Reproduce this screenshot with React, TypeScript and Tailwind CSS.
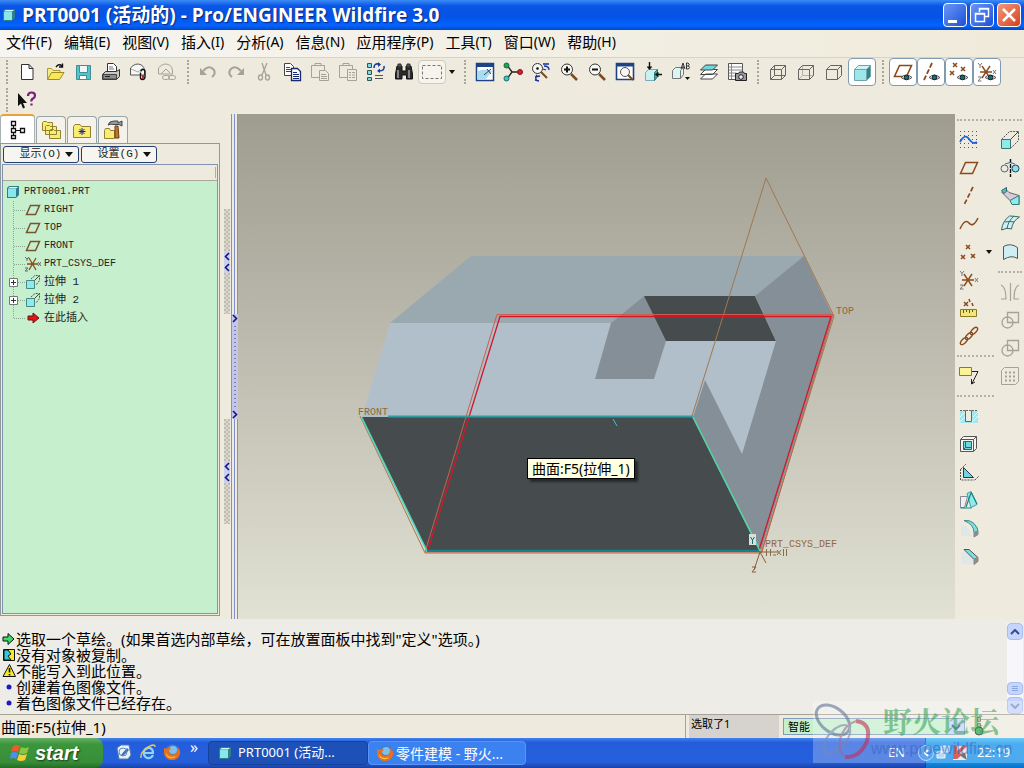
import { FC, ReactNode } from "react";

interface IconProps {
  children: ReactNode;
}

// Shared 20x20 frame for every toolbar drawing
const Icon: FC<IconProps> = ({ children }) => (
  <svg
    viewBox="0 0 20 20"
    className="h-5 w-5 shrink-0"
    fill="none"
    stroke="#333"
    strokeWidth={1}
    aria-hidden="true"
  >
    {children}
  </svg>
);

const brown = "#8a4a1c";
const gray = "#a5a296";

const Eye = () => (
  <g>
    <path d="M8 15.5q5-5 11 0q-5 4-11 0z" fill="#dfe8e4" stroke="#555" />
    <circle cx="13.5" cy="15.5" r="2.3" fill="#1f6e66" stroke="#123" />
  </g>
);

const Cross: FC<{ x: number; y: number; c?: string }> = ({ x, y, c }) => (
  <path
    d={`M${x - 2} ${y - 2}l4 4m0-4l-4 4`}
    stroke={c ?? brown}
    strokeWidth={1.5}
  />
);

const Csys = () => (
  <g>
    <path d="M3 10h12M5 4l8 12M13 4L5 16" stroke={brown} strokeWidth={1.4} />
    <path
      d="M1 1l2 2.5L5 1M3 3.5V6M1 15h3.5L1 19h3.500M16 8l3 4m0-4l-3 4"
      stroke="#777"
    />
  </g>
);

const Magnifier: FC<{ sign?: string }> = ({ sign }) => (
  <g>
    <path d="M12 12l6 6" stroke="#7a4a20" strokeWidth={2.5} />
    <circle cx="8" cy="7.500" r="5.500" fill="#f7f7f2" />
    {sign && <path d={sign} stroke="#111" strokeWidth={2} />}
  </g>
);

const icons: Record<string, ReactNode> = {
  newFile: (
    <path d="M4.500 2.500h7.500l4 4v11H4.500zM12 2.500v4h4" fill="#fff" />
  ),
  open: (
    <g>
      <path d="M2.500 17.500v-11h4l1.500 2h7v3" fill="#f4ee8a" stroke="#b09a30" />
      <path d="M2.500 17.500l4-7h12.500l-4.500 7z" fill="#f7e95c" stroke="#a08a20" />
      <path d="M11 5q3-4 6-1M17.500 1.500v3.500h-3.500" stroke="#111" strokeWidth={1.400} />
    </g>
  ),
  save: (
    <g stroke="#3f8f96">
      <path d="M3.500 3.500h14v14h-14z" fill="#55c4c8" />
      <path d="M6.500 3.500h8v7h-8z" fill="#eef8f8" />
      <path d="M6.500 13.500h7v4h-7z" fill="#fff" />
    </g>
  ),
  print: (
    <g>
      <path d="M6.500 9.500v-8h6l3 3v5" fill="#fff" />
      <path d="M8 5h4M8 7h5" stroke="#777" />
      <path d="M1.500 12.500l3-3h11l3-2v7l-3 3h-14z" fill="#c9c9c9" />
      <path d="M2 12.500h13.500v4.500H2z" fill="#8f8f8f" stroke="#444" />
      <path d="M4 14.500h5" stroke="#222" />
    </g>
  ),
  mail: (
    <g>
      <path d="M1.500 13V6q5-6 11-3q3 2 3 6v4z" fill="#f7f7f4" stroke="#555" />
      <path d="M2 7l7 3 5-4" stroke="#aaa" />
      <path d="M12 9.500q0-2 2-2t2 2v5q0 3-2.500 3t-2-3v-4" stroke="#111" strokeWidth={1.400} />
      <path d="M13 13h2v4h-2z" fill="#a33" stroke="none" />
    </g>
  ),
  mailLink: (
    <g stroke={gray}>
      <path d="M1.500 12V6q5-6 11-3q3 2 3 6v3z" />
      <path d="M4 12l5-5 4 4" />
      <rect x="5.500" y="13.500" width="7" height="4" rx="2" />
      <rect x="11.500" y="13.500" width="7" height="4" rx="2" />
    </g>
  ),
  undo: (
    <g stroke={gray} strokeWidth={2}>
      <path d="M5 9q6-7 11-1q2 4-2 7" />
      <path d="M2 6v7h7z" fill={gray} stroke="none" />
    </g>
  ),
  redo: (
    <g stroke={gray} strokeWidth={2}>
      <path d="M15 9Q9 2 4 8q-2 4 2 7" />
      <path d="M18 6v7h-7z" fill={gray} stroke="none" />
    </g>
  ),
  cut: (
    <g stroke={gray} strokeWidth={1.300}>
      <path d="M8 1l4 12M13 1L8 13" />
      <ellipse cx="6.500" cy="15.500" rx="2" ry="2.500" />
      <ellipse cx="13.500" cy="15.500" rx="2" ry="2.500" />
    </g>
  ),
  copy: (
    <g stroke="#444">
      <path d="M2.500 1.500h6l3 3v9h-9z" fill="#fff" />
      <path d="M4 5.500h4M4 7.500h5M4 9.500h5" stroke="#444" />
      <path d="M9.500 6.500h6l3 3v9h-9z" fill="#fff" stroke="#17296e" strokeWidth={1.300} />
      <path d="M11 10.500h4M11 12.500h6M11 14.500h6M11 16.500h6" stroke="#17296e" />
    </g>
  ),
  paste: (
    <g stroke={gray}>
      <path d="M1.500 3.500h13v12h-13zM5 3.500v-2h6v2z" />
      <path d="M9.500 8.500h6l3 3v7h-9z" fill="#eeeade" />
      <path d="M11 12.500h5M11 14.500h6M11 16.500h6" />
    </g>
  ),
  pasteSpecial: (
    <g stroke={gray}>
      <path d="M1.500 3.500h13v12h-13zM5 3.500v-2h6v2z" />
      <path d="M9.500 7.500h9v11h-9z" fill="#eeeade" />
      <path d="M11 10.500h2M14 10.500h3M11 13h2M14 13h3M11 15.500h2M14 15.500h3" />
    </g>
  ),
  regen: (
    <g>
      <path d="M1.500 1.500h4v4h-4zM1.500 8.500h4v4h-4zM1.500 15.500h4v3h-4z" fill="#7ed9dc" stroke="#355" />
      <path d="M8 6q0-5 5-4M18 4q1 5-5 5" stroke="#1a3a9a" strokeWidth={1.600} />
      <path d="M12 0v5l3-2.500zM14 11V6.500l-3 2.500z" fill="#1a3a9a" stroke="none" />
      <path d="M9 13.500h8M9 16.500h8" stroke="#555" />
    </g>
  ),
  find: (
    <g>
      <path d="M3 4h5v5h4V4h5l1.500 8v5h-6v-4H8v4H1.500v-5z" fill="#2b2b2b" stroke="#111" />
      <path d="M4 2h3v3H4zM13 2h3v3h-3z" fill="#555" />
      <path d="M4 8v8M15 8v8" stroke="#ddd" />
    </g>
  ),
  box: <path d="M.5 3.500h19v13H.5z" stroke="#777" strokeDasharray="3 2" />,
  view: (
    <g>
      <path d="M1.500 1.500h17v17h-17z" fill="#fff" stroke="#1c4385" strokeWidth={1.500} />
      <path d="M1 1h18v4H1z" fill="#1c4385" stroke="none" />
      <path d="M3 9q7-3 14 0l-6 8H3z" fill="#a8dcf0" stroke="none" />
      <path d="M9 13L16 7M12 7l4 5" stroke="#346" />
    </g>
  ),
  tree3d: (
    <g>
      <path d="M4 3l5 7-5 7M9 10h8" stroke="#222" strokeWidth={1.400} />
      <circle cx="3.500" cy="3.500" r="2.500" fill="#1faa38" stroke="#165" />
      <circle cx="3.500" cy="16.500" r="2.500" fill="#3cc4c8" stroke="#266" />
      <circle cx="17" cy="10" r="2.500" fill="#d0202c" stroke="#812" />
    </g>
  ),
  reorient: (
    <g>
      <circle cx="6.500" cy="6.500" r="5" fill="#f7f7f2" />
      <circle cx="6.500" cy="6.500" r="1" fill="#111" />
      <path d="M10 10l6 6" stroke="#7a4a20" strokeWidth={2} />
      <path d="M12 2h6M13 4q5 0 5 4M12 7l3 1M6 13q-3 4 1 6M4 15l5-1M8 19l-4-1" stroke="#15329a" strokeWidth={1.300} />
    </g>
  ),
  zoomIn: <Magnifier sign="M5 7.500h6M8 4.500v6" />,
  zoomOut: <Magnifier sign="M5 7.500h6" />,
  refit: (
    <g>
      <path d="M1.500 1.500h17v16h-17z" fill="#fff" stroke="#1c4385" strokeWidth={1.600} />
      <path d="M1 1h18v3.500H1z" fill="#1c4385" stroke="none" />
      <circle cx="10" cy="10" r="4.500" fill="#f7f7f2" stroke="#555" />
      <path d="M13 13l5 5" stroke="#7a4a20" strokeWidth={2} />
    </g>
  ),
  orient: (
    <g>
      <path d="M2.500 10.500l3-3h9v7l-3 4h-9z" fill="#c8f2f2" stroke="#7ab" />
      <path d="M11.500 10.500l3-3v7l-3 4z" fill="#4aa0a0" stroke="#377" />
      <path d="M6.500 0v7M4.500 4.500l2 2.500 2-2.500M19 12.500h-6M15.500 10.500l-2.500 2 2.500 2" stroke="#111" strokeWidth={1.400} />
    </g>
  ),
  saved: (
    <g>
      <path d="M1.500 8.500l3-3h8v7l-3 4h-8z" fill="#ddf4f4" stroke="#777" />
      <path d="M9.500 16.500v-8l3-3" stroke="#777" />
      <path d="M10 7l2-6 2 6M11 5h2M15.500 1v6h2q2-2 0-3q1.500-2-.5-3zM15.500 4h2" stroke="#333" />
      <path d="M14 15h5l-2.500 3z" fill="#111" stroke="none" />
    </g>
  ),
  layers: (
    <g stroke="#444">
      <path d="M1.500 17l5-5h12l-5 5zM1.500 12.500l5-5h12l-5 5z" fill="#fff" />
      <path d="M1.500 8l5-5h12l-5 5z" fill="#6fd8dc" />
    </g>
  ),
  snapshot: (
    <g>
      <path d="M1.500 1.500h14v16h-14z" fill="#fff" stroke="#555" />
      <path d="M4.500 2v15M1.500 5h14M1.500 8h14M1.500 11h8M1.500 14h8" stroke="#888" />
      <path d="M8.500 11.500h3l1-1.500h4l1 1.500h2v7h-11z" fill="#999" stroke="#222" />
      <circle cx="14" cy="15" r="2.300" fill="#eee" stroke="#222" />
    </g>
  ),
  wire: (
    <path d="M2.500 7.500h11v10h-11zM6.500 3.500h11v10h-11zM2.500 7.500l4-4M13.500 7.500l4-4M13.500 17.500l4-4M2.500 17.500l4-4" stroke="#666" />
  ),
  hidden: (
    <g stroke="#666">
      <path d="M6.500 3.500v10h11M6.500 13.500l-4 4" stroke="#b5b2a8" />
      <path d="M2.500 7.500h11v10h-11zl4-4h11v10l-4 4M13.500 7.500l4-4" />
    </g>
  ),
  noHidden: (
    <path d="M2.500 7.500h11v10h-11zl4-4h11v10l-4 4M13.500 7.500l4-4" stroke="#666" />
  ),
  shaded: (
    <g stroke="#6aa8ac">
      <path d="M2.500 7.500l4-4h12l-4 4z" fill="#c9f5f5" />
      <path d="M2.500 7.500h12v11h-12z" fill="#9fe6e8" />
      <path d="M14.500 7.500l4-4v11l-4 4z" fill="#357f86" />
    </g>
  ),
  planeEye: (
    <g>
      <path d="M6.500 3.500h12l-5 11h-12z" stroke={brown} strokeWidth={1.600} />
      <Eye />
    </g>
  ),
  axisEye: (
    <g>
      <path d="M11 1L3 18" stroke={brown} strokeWidth={1.800} strokeDasharray="5 2" />
      <Eye />
    </g>
  ),
  pointEye: (
    <g>
      <Cross x={6} y={3} />
      <Cross x={3} y={11} />
      <Cross x={14} y={7} />
      <Eye />
    </g>
  ),
  csysEye: (
    <g>
      <Csys />
      <Eye />
    </g>
  ),
  help: (
    <g>
      <path d="M1 3v13l3-2.500 2 5 2-1-2-4.500h4z" fill="#111" stroke="none" />
      <path d="M11 6q0-3.500 3.500-3.500t3.500 3q0 2-2 3t-1.500 3M14.500 13.500v2" stroke="#7c1d7c" strokeWidth={2.200} />
    </g>
  ),
  sketch: (
    <g>
      {[1, 5, 9, 13, 17].map((y) => (
        <path key={y} d={`M1 ${y}.500h19`} stroke="#555" strokeDasharray="1 3" />
      ))}
      <path d="M1 12q5-9 9-3t8 3" stroke="#1c62d8" strokeWidth={1.800} />
    </g>
  ),
  plane: <path d="M6.500 4.500h12l-5 11h-12z" stroke={brown} strokeWidth={1.500} />,
  axis: <path d="M14 1L5 19" stroke={brown} strokeWidth={1.700} strokeDasharray="5 2" />,
  curve: <path d="M1 15q5-11 9-6t9-5" stroke={brown} strokeWidth={1.500} />,
  points: (
    <g>
      <Cross x={9} y={5} />
      <Cross x={4} y={15} />
      <Cross x={14} y={14} />
    </g>
  ),
  csys: <Csys />,
  analysis: (
    <g>
      <Cross x={7} y={6} />
      <path d="M10 1l1 3M13 5l1 3" stroke={brown} strokeWidth={1.500} />
      <path d="M1.500 11.500h16v7h-16z" fill="#f0e67c" stroke="#8a7a20" />
      <path d="M4.500 12v3M7.500 12v2M10.500 12v3M13.500 12v2" stroke="#6a5a10" />
    </g>
  ),
  chain: (
    <g stroke={brown} strokeWidth={1.400}>
      <ellipse cx="5" cy="15" rx="4.500" ry="2.200" transform="rotate(-45 5 15)" />
      <ellipse cx="10" cy="10" rx="4.500" ry="2.200" transform="rotate(-45 10 10)" />
      <ellipse cx="15" cy="5" rx="4.500" ry="2.200" transform="rotate(-45 15 5)" />
    </g>
  ),
  note: (
    <g>
      <path d="M.5 1.500h12v8H.5z" fill="#faf39a" stroke="#8a7a20" />
      <path d="M13 5.500h6l-6 12M12.500 13v5l3.500-2" stroke="#222" />
    </g>
  ),
  hole: (
    <g>
      <path d="M1 5h18v12H1z" fill="#a3e6ee" stroke="none" />
      <path d="M1 11l5-5M1 16l6-6M13 16l6-6M14 11l5-5" stroke="#eafcff" />
      <path d="M4 4.500h2.500v11h6v-11H15" fill="#eeeade" stroke="#666" />
      <path d="M1 4.500h18" stroke="#666" strokeDasharray="2 1" />
    </g>
  ),
  shell: (
    <g stroke="#555">
      <path d="M1.500 5.500l3-3h13v12l-3 3h-13z" fill="#f5f5f0" />
      <path d="M1.500 5.500h13v12M14.500 5.500l3-3" />
      <path d="M4.500 7.500h8v8h-8z" fill="#6fd8dc" />
      <path d="M4.500 15.500l2-2v-6M6.500 13.500h6" />
    </g>
  ),
  rib: (
    <g>
      <path d="M4.500 5.500v10h10z" fill="#6fd8dc" stroke="#335" />
      <path d="M1.500 7v11h14M2 7l5-5M16 18l4-4" stroke="#555" strokeDasharray="2 1" />
    </g>
  ),
  draft: (
    <g>
      <path d="M8 3.500l4-2 6 13-6 3z" fill="#8feaec" stroke="#599" />
      <path d="M1.500 6.500h7l-3 11h-4z" fill="#f1f1ec" stroke="#889" />
      <path d="M1.500 18h11M12 3L7 17M12 2l6 12" stroke="#188" strokeWidth={1.200} />
    </g>
  ),
  round: (
    <g>
      <path d="M2 7q9 1 10 11H2z" fill="#dfe8e8" stroke="none" />
      <path d="M5 2.500q6-1 10 3 4 4 4 8l-4 1q0-8-10-12z" fill="#7bdde0" stroke="#488" />
      <path d="M15 14.500l4-1v3l-4 2.500z" fill="#8a8f8c" stroke="#888" />
    </g>
  ),
  chamfer: (
    <g>
      <path d="M2 6l4 0 8 8v4H2z" fill="#dfe8e8" stroke="none" />
      <path d="M5 3.500h5l9 8-4 2z" fill="#7bdde0" stroke="#555" />
      <path d="M15 13.500l4-2v4l-4 3z" fill="#8a8f8c" stroke="#888" />
    </g>
  ),
  extrude: (
    <g>
      <path d="M1.500 9.500l8-8h9v9l-8 8" stroke="#555" strokeDasharray="2 1" />
      <path d="M1.500 9.500h9v9h-9z" fill="#8feaec" stroke="#377" />
      <path d="M10.500 9.500l8-8" stroke="#444" />
    </g>
  ),
  revolve: (
    <g>
      <circle cx="4.500" cy="10.500" r="3.500" stroke="#468" />
      <circle cx="15.500" cy="10.500" r="3.500" fill="#8fdfe4" stroke="#246" />
      <path d="M10.500 1v18" stroke="#111" strokeDasharray="4 1" strokeWidth={1.400} />
      <path d="M5 6q5-3 10 0" stroke="#468" />
    </g>
  ),
  sweep: (
    <g>
      <path d="M5 2.500l4 4 10 3v9l-9-4-8-8z" fill="#d4ccd8" stroke="#666" />
      <path d="M1.500 4.500l5-3v4l-3 2z" fill="#48c4c8" stroke="#366" />
      <path d="M10 14.500l9-5v9h-7z" fill="#8feaec" stroke="#377" />
    </g>
  ),
  boundary: (
    <g>
      <path d="M1.500 16q1-9 8-14 4 0 10 1-7 4-8 12-4-2-10 1z" fill="#c9f3f3" stroke="#466" />
      <path d="M5 8q5-1 9 0M14 2q-6 5-7 13" stroke="#466" />
    </g>
  ),
  style: (
    <path d="M3.500 4.500q7-4 14 1v11q-6-4-14 1z" fill="#cdeff3" stroke="#555" />
  ),
  mirror: (
    <path d="M10.500 1v18M1 3q5 2 5 14h-5M19 3q-5 2-5 14h5" stroke={gray} strokeWidth={1.200} />
  ),
  merge: (
    <g stroke={gray} strokeWidth={1.300}>
      <circle cx="7.500" cy="12.500" r="5.500" />
      <path d="M7.500 2.500h11v10h-11z" />
    </g>
  ),
  pattern: (
    <g stroke={gray}>
      <path d="M1.500 4.500l3-3h14v14l-3 3h-14z" />
      <path d="M5 6.500h11M5 10.500h11M5 14.500h11" strokeWidth={2} strokeDasharray="2 2" />
    </g>
  ),
};

interface ToolProps {
  name: string;
  boxed?: boolean;
}

const Tool: FC<ToolProps> = ({ name, boxed }) => (
  <button
    type="button"
    aria-label={name}
    className={
      boxed
        ? "flex h-7 w-7 shrink-0 items-center justify-center rounded-sm border border-[#7f9bb0] bg-white"
        : "flex h-7 w-7 shrink-0 items-center justify-center"
    }
  >
    <Icon>{icons[name]}</Icon>
  </button>
);

const VSep = () => (
  <div className="flex h-7 w-[13px] shrink-0 justify-center py-[2px]">
    <div className="border-l-2 border-dotted border-[#aaa798]" />
  </div>
);

const HSep = () => (
  <div className="flex h-3 w-full flex-col justify-center px-[2px]">
    <div className="border-t-2 border-dotted border-[#b5b2a4]" />
  </div>
);

const Caret = () => (
  <svg viewBox="0 0 6 4" className="h-1 w-[6px]" aria-hidden="true">
    <path d="M0 0h6L3 4z" fill="#111" />
  </svg>
);

const Cube = () => (
  <svg viewBox="0 0 14 14" className="h-[14px] w-[14px] shrink-0" aria-hidden="true">
    <path d="M1 3l2-2h10v9l-3 3H1z" fill="#2f7f8a" />
    <path d="M2 3.500l1.500-1.500h8.500l-2 1.500z" fill="#d8fbfb" />
    <path d="M2 4h8v8H2z" fill="#86e8ea" />
  </svg>
);

const Firefox = () => (
  <svg viewBox="0 0 18 18" className="h-[18px] w-[18px] shrink-0" aria-hidden="true">
    <circle cx="9.500" cy="8.500" r="7" fill="#3d7fd6" />
    <circle cx="10" cy="7" r="4" fill="#7cc0ee" />
    <path d="M1 5q2 1 4 0 2-1 3 1-3 1-2 4 2 3 6 1 3-2 2-7 4 3 3 7-2 6-8 6T1 11z" fill="#e8701c" />
    <path d="M3 10q3 6 10 3-2 3-6 2-4-1-4-5z" fill="#f8c83c" />
  </svg>
);

const menus = [
  ["文件", "(F)"],
  ["编辑", "(E)"],
  ["视图", "(V)"],
  ["插入", "(I)"],
  ["分析", "(A)"],
  ["信息", "(N)"],
  ["应用程序", "(P)"],
  ["工具", "(T)"],
  ["窗口", "(W)"],
  ["帮助", "(H)"],
];

const TitleBar = () => (
  <header className="flex h-[30px] items-center bg-[linear-gradient(#3a8cf5,#0a55e5_20%,#0553e6_55%,#0263ff_85%,#0348c8)] pr-[3px] pl-[2px]">
    <Cube />
    <h1 className="ml-[6px] flex-1 font-['Open_Sans','Noto_Sans_CJK_SC',sans-serif] text-[19px] leading-none font-bold whitespace-nowrap text-white [text-shadow:1px_1px_1px_#0a2a80]">
      PRT0001 (活动的) - Pro/ENGINEER Wildfire 3.0
    </h1>
    <div className="flex gap-[3px]">
      <button type="button" aria-label="Minimize" className="h-6 w-6 rounded border border-white bg-linear-to-br from-[#6a96f5] to-[#1c4fd8]">
        <svg viewBox="0 0 22 22" aria-hidden="true">
          <path d="M4 16h9v3H4z" fill="#fff" />
        </svg>
      </button>
      <button type="button" aria-label="Restore" className="h-6 w-6 rounded border border-white bg-linear-to-br from-[#6a96f5] to-[#1c4fd8]">
        <svg viewBox="0 0 22 22" fill="none" stroke="#fff" aria-hidden="true">
          <path d="M8.500 8V4.500h9v8H14M8 5h10M4.500 9.500h9v8h-9zM4 10h10" strokeWidth={1.500} />
        </svg>
      </button>
      <button type="button" aria-label="Close" className="h-6 w-6 rounded border border-white bg-linear-to-br from-[#f0987a] to-[#d63c14]">
        <svg viewBox="0 0 22 22" fill="none" stroke="#fff" aria-hidden="true">
          <path d="M5 5l12 12M17 5L5 17" strokeWidth={2.500} />
        </svg>
      </button>
    </div>
  </header>
);

const MenuBar = () => (
  <nav className="flex h-7 items-start gap-3 border-b border-[#d8d4c4] bg-linear-to-r from-[#f6f5f1] to-[#efeada] pt-[2px] pl-[6px]">
    {menus.map(([label, key]) => (
      <button key={label} type="button" className="flex items-center whitespace-nowrap">
        <span className="text-[15px] leading-5">{label}</span>
        <span className="text-[14px] leading-5">{key}</span>
      </button>
    ))}
  </nav>
);

const ToolBars = () => (
  <div>
    <div className="flex h-7 items-center">
      <VSep />
      {["newFile", "open", "save", "print", "mail", "mailLink"].map((n) => (
        <Tool key={n} name={n} />
      ))}
      <VSep />
      {["undo", "redo", "cut", "copy", "paste", "pasteSpecial", "regen", "find"].map(
        (n) => (
          <Tool key={n} name={n} />
        )
      )}
      <button
        type="button"
        aria-label="box"
        className="flex h-6 w-7 shrink-0 items-center justify-center rounded-sm border border-[#cfcbbb] bg-[#f6f4ec]"
      >
        <Icon>{icons.box}</Icon>
      </button>
      <button type="button" aria-label="filter" className="flex h-7 w-3 shrink-0 items-center justify-center">
        <Caret />
      </button>
      <VSep />
      {[
        "view",
        "tree3d",
        "reorient",
        "zoomIn",
        "zoomOut",
        "refit",
        "orient",
        "saved",
        "layers",
        "snapshot",
      ].map((n) => (
        <Tool key={n} name={n} />
      ))}
      <VSep />
      <Tool name="wire" />
      <Tool name="hidden" />
      <Tool name="noHidden" />
      <Tool name="shaded" boxed />
      <VSep />
      {["planeEye", "axisEye", "pointEye", "csysEye"].map((n) => (
        <Tool key={n} name={n} boxed />
      ))}
    </div>
    <div className="flex h-7 items-center">
      <VSep />
      <Tool name="help" />
    </div>
  </div>
);

interface TreeRow {
  label: string;
  icon: "plane" | "csys" | "extrude" | "insert";
  plus?: boolean;
}

const treeRows: TreeRow[] = [
  { label: "RIGHT", icon: "plane" },
  { label: "TOP", icon: "plane" },
  { label: "FRONT", icon: "plane" },
  { label: "PRT_CSYS_DEF", icon: "csys" },
  { label: "拉伸 1", icon: "extrude", plus: true },
  { label: "拉伸 2", icon: "extrude", plus: true },
  { label: "在此插入", icon: "insert" },
];

const treeIcons = {
  plane: <path d="M5.500 3.500h9l-4 9h-9z" stroke="#7a5230" strokeWidth={1.500} />,
  csys: (
    <g>
      <path d="M2 8h11M4 2l7 12M11 2L4 14" stroke={brown} strokeWidth={1.300} />
      <path d="M0 1l2 2 2-2M2 3v2M0 12h3l-3 3h3M13 6l3 4m0-4l-3 4" stroke="#666" />
    </g>
  ),
  extrude: (
    <g>
      <path d="M1.500 6.500h8v8h-8z" fill="#8feaec" stroke="#488" />
      <path d="M6 5l4-3.500h4.500v5L11 11" stroke="#555" strokeDasharray="2 1" />
      <path d="M9.500 6.500l5-5" stroke="#444" />
    </g>
  ),
  insert: <path d="M3 6h5V3l6 5-6 5v-3H3z" fill="#e01818" stroke="#701010" />,
};

const FolderShape = () => (
  <path d="M1.500 17.500v-11l1.500-2h5l1.500 2h9v11z" fill="#f8ec72" stroke="#8f8330" />
);

const tabClass =
  "flex h-[27px] w-[30px] items-center justify-center rounded-t-sm border border-b-0 border-[#9aa5a8] bg-[#f4f2ea]";

const ModelTree = () => (
  <aside className="flex w-[220px] shrink-0 flex-col pb-[3px]">
    <div className="flex h-[29px] items-end gap-[1px]">
      <button type="button" aria-label="Model tree" className="flex h-[29px] w-[35px] items-center justify-center rounded-t border-x border-t-2 border-x-[#a9b3b4] border-t-[#e9a23a] bg-white">
        <Icon>
          <path d="M3.500 1.500h4v4h-4zM3.500 8.500h4v4h-4zM3.500 15.500h4v3h-4zM12.500 8.500h4v4h-4z" stroke="#111" strokeWidth={1.300} />
          <path d="M5.500 5.500v3M5.500 12.500v3M7.500 10.500h5" stroke="#111" />
        </Icon>
      </button>
      <button type="button" aria-label="Folders" className={tabClass}>
        <Icon>
          <g fill="#f8ec72" stroke="#8f8330">
            <path d="M1.500 10.500v-8l1-1h3l1 1h5v8zM4.500 14.500v-8l1-1h3l1 1h6v8zM8.500 18.500v-8l1-1h3l1 1h6v8z" />
          </g>
        </Icon>
      </button>
      <button type="button" aria-label="Favorites" className={tabClass}>
        <Icon>
          <FolderShape />
          <path d="M10 8v7M6.500 11.500h7M7.500 9l5 5M12.500 9l-5 5" stroke="#15258a" />
        </Icon>
      </button>
      <button type="button" aria-label="Connections" className={tabClass}>
        <Icon>
          <path d="M1.500 18.500v-8l1-2h4l1 2h4v8z" fill="#f8ec72" stroke="#8f8330" />
          <path d="M5 5q1-4 6-4h4v2l4-2v5l-3-1.500h-5q-3-1-6 .500z" fill="#8fa0a4" stroke="#444" />
          <path d="M12 6h3l1 12h-4z" fill="#c4752c" stroke="#6d3d12" />
        </Icon>
      </button>
    </div>
    <div className="flex flex-1 flex-col border border-[#8d9a9c] p-[1px] pt-[2px]">
      <div className="flex gap-[2px] px-[1px] pb-[1px]">
        {["显示(O)", "设置(G)"].map((label) => (
          <button
            key={label}
            type="button"
            className="flex h-[17px] w-[76px] items-center justify-center gap-1 rounded-[3px] border border-[#24406a] bg-[#f6f5f0] pl-[11px] font-['Liberation_Mono','Noto_Sans_CJK_SC',monospace] text-[11px] leading-none whitespace-nowrap text-[#222]"
          >
            {label}
            <svg viewBox="0 0 8 5" className="h-[5px] w-2" aria-hidden="true">
              <path d="M0 0h8L4 5z" fill="#111" />
            </svg>
          </button>
        ))}
      </div>
      <div className="flex flex-1 flex-col border border-[#8292b0] bg-[#c6efce]">
        <div className="flex h-4 justify-end border-b border-[#aaa798] bg-[#eeeade] py-[2px] pr-[1px]">
          <div className="border-l border-[#b0ad9f]" />
        </div>
        <ul className="pt-[2px] font-['Liberation_Mono','Noto_Sans_CJK_SC',monospace] text-[10px] leading-[18px] text-[#222]">
          <li className="flex h-[18px] items-center gap-1 pl-[3px]">
            <Cube />
            PRT0001.PRT
          </li>
          {treeRows.map((row, i) => (
            <li key={row.label} className="flex h-[18px] items-center">
              <svg viewBox="0 0 22 18" className="h-[18px] w-[22px]" fill="none" stroke="#8aa890" aria-hidden="true">
                <path d={i === treeRows.length - 1 ? "M10.500 0v9" : "M10.500 0v18"} strokeDasharray="1 1" />
                <path d="M11 9.500h11" strokeDasharray="1 1" />
                {row.plus && (
                  <g stroke="#333">
                    <path d="M6.500 5.500h8v8h-8z" fill="#fff" stroke="#777" />
                    <path d="M8 9.500h5M10.500 7v5" />
                  </g>
                )}
              </svg>
              <svg viewBox="0 0 16 16" className="mr-[3px] h-4 w-4" fill="none" aria-hidden="true">
                {treeIcons[row.icon]}
              </svg>
              <span className={row.icon === "extrude" || row.icon === "insert" ? "text-[11px]" : ""}>
                {row.label}
              </span>
            </li>
          ))}
        </ul>
      </div>
    </div>
  </aside>
);

const SashGrip = () => (
  <svg viewBox="0 0 6 105" className="h-[105px] w-[6px]" fill="none" aria-hidden="true">
    <path d="M0 0h6v105H0z" fill="#dcd9cf" />
    <path d="M1 0v105M5 0v105" stroke="#a09d92" strokeDasharray="2 2" />
    <path d="M3 2v103" stroke="#a09d92" strokeDasharray="2 2" />
    <path d="M0 42h6v22H0z" fill="#cdd0ea" />
    <path d="M5 44L1.500 47.500 5 51M5 55l-3.500 3.500L5 62" stroke="#12128a" strokeWidth={1.600} />
  </svg>
);

const Splitter = () => (
  <div className="flex w-[18px] shrink-0">
    <div className="flex w-[11px] flex-col items-center justify-center gap-[105px] pl-[2px]">
      <SashGrip />
      <SashGrip />
    </div>
    <div className="flex w-[7px] flex-col items-center border-x border-[#7f8fcf]">
      <div className="w-px flex-1 bg-[#7f8fcf]" />
      <svg viewBox="0 0 6 105" className="h-[105px] w-[6px]" fill="none" aria-hidden="true">
        <path d="M0 0h6v105H0z" fill="#c3c6ea" />
        <path d="M3 12v82" stroke="#33336a" strokeDasharray="1 3" />
        <path d="M1 1l3.500 3.500L1 8M1 97l3.500 3.500L1 104" stroke="#12128a" strokeWidth={1.600} />
      </svg>
      <div className="w-px flex-1 bg-[#7f8fcf]" />
    </div>
  </div>
);

const Viewport = () => (
  <main className="relative min-w-0 flex-1 bg-linear-to-b from-[#9f9c90] to-[#e1e1d4]">
    <svg viewBox="238 114 717 505" className="absolute inset-0 h-full w-full" fill="none">
      <g stroke="none">
        <path d="M471 256H804L755 296H644L611 323H390z" fill="#9aa8b0" />
        <path d="M390 323H611L595 379H654L666 341H776L742 454 705 380 694 417H362z" fill="#b0bfca" />
        <path d="M644 296L611 323 595 379H654L666 341z" fill="#858f98" />
        <path d="M644 296H755L776 341H666z" fill="#464c4e" />
        <path d="M804 256L833 316 761 551 693 417 705 380 742 454 776 341 755 296z" fill="#858f98" />
        <path d="M362 417H693L760 551H427z" fill="#464c4e" />
      </g>
      <path d="M766 178L834 316 761 553 692 416z" stroke="#a07850" />
      <path d="M360 416L425 553H761" stroke="#a87848" />
      <path d="M497 314.500H833L762 552H425z" stroke="#c8604c" />
      <path d="M500 316.500H831L759 550H428z" stroke="#d0182c" strokeWidth={1.300} />
      <path d="M362 418L427 551" stroke="#48d8c0" strokeWidth={1.500} />
      <path d="M388 416.500H693" stroke="#2f9ca4" strokeWidth={2} />
      <path d="M427 551H760" stroke="#12828e" strokeWidth={2} />
      <path d="M693 417L760 551" stroke="#48d8a8" strokeWidth={1.500} />
      <path d="M613 419l4 7" stroke="#38c8c8" />
      <path d="M749 534h7v11h-7z" fill="#d8e0dc" />
      <path d="M750.500 537l2 3 2-3M752.500 540v4" stroke="#0f6e6e" />
      <path d="M760 552h18M760 552l6 11M760 552l-6 18M752 567h4l-4 5h4" stroke="#8a6038" />
      <g fill="#94683c" className="font-['Liberation_Mono',monospace] text-[10px]">
        <text x="836" y="314">TOP</text>
        <text x="358" y="415">FRONT</text>
        <text x="765" y="547">PRT_CSYS_DEF</text>
      </g>
      <path d="M766.500 549v7M770.500 549v7M773 555h3M777 550l4 5m0-5l-4 5M783.500 549v7M786.500 549v7" stroke="#8a6a4a" />
    </svg>
    <div className="absolute top-[344px] left-[289px] border border-black bg-[#ffffe1] px-1 text-[14px] leading-[19px] whitespace-nowrap shadow-[3px_3px_2px_rgba(0,0,0,0.45)]">
      曲面:F5(拉伸_1)
    </div>
  </main>
);

const RightTools = () => (
  <div className="flex w-[69px] shrink-0">
    <div className="flex w-[41px] flex-col">
      <HSep />
      {["sketch", "plane", "axis", "curve"].map((n) => (
        <Tool key={n} name={n} />
      ))}
      <div className="flex items-center">
        <Tool name="points" />
        <button type="button" aria-label="more points" className="flex h-7 w-3 items-center justify-center">
          <Caret />
        </button>
      </div>
      {["csys", "analysis", "chain"].map((n) => (
        <Tool key={n} name={n} />
      ))}
      <HSep />
      <Tool name="note" />
      <HSep />
      {["hole", "shell", "rib", "draft", "round", "chamfer"].map((n) => (
        <Tool key={n} name={n} />
      ))}
    </div>
    <div className="flex w-7 flex-col">
      <HSep />
      {["extrude", "revolve", "sweep", "boundary", "style"].map((n) => (
        <Tool key={n} name={n} />
      ))}
      <HSep />
      <Tool name="mirror" />
      <Tool name="merge" />
      <button type="button" aria-label="intersect" className="flex h-7 w-7 items-center justify-center">
        <Icon>{icons.merge}</Icon>
      </button>
      <Tool name="pattern" />
    </div>
  </div>
);

const Bullet = () => <circle cx="7" cy="8" r="2.500" fill="#1a1ac8" />;

const messages: { icon: ReactNode; text: string }[] = [
  {
    icon: <path d="M1 6h5V2.500l6 5.500-6 5.500V10H1z" fill="#3ddc6a" stroke="#111" />,
    text: '选取一个草绘。(如果首选内部草绘，可在放置面板中找到"定义"选项。)',
  },
  {
    icon: (
      <g stroke="#111">
        <path d="M1.500 2.500h11v11h-11z" fill="#f6ea2c" />
        <path d="M2 3h4l3 4-3 2 3 4H2z" fill="#35c8d8" />
      </g>
    ),
    text: "没有对象被复制。",
  },
  {
    icon: (
      <g>
        <path d="M7.500 1.500l6 12H1z" fill="#f8ea20" stroke="#111" />
        <path d="M7.500 5v4.500M7.500 11v1.500" stroke="#111" strokeWidth={1.600} />
      </g>
    ),
    text: "不能写入到此位置。",
  },
  { icon: <Bullet />, text: "创建着色图像文件。" },
  { icon: <Bullet />, text: "着色图像文件已经存在。" },
];

const scrollButton =
  "flex h-[17px] w-4 items-center justify-center rounded-sm border border-[#a9bdf0] bg-[#c6d5fc]";

const MessageLog = () => (
  <section className="flex h-24 shrink-0 border-b border-[#a5a294] bg-[#eeece6]">
    <ul className="flex-1 pt-3 pl-[2px]">
      {messages.map(({ icon, text }) => (
        <li key={text} className="flex h-4 items-center text-[15px] leading-4 whitespace-nowrap">
          <svg viewBox="0 0 14 16" className="h-4 w-[14px] shrink-0" aria-hidden="true">
            {icon}
          </svg>
          {text}
        </li>
      ))}
    </ul>
    <div className="mt-1 mr-[1px] flex w-4 flex-col bg-[#f7f7fb]">
      <button type="button" aria-label="Scroll up" className={scrollButton}>
        <svg viewBox="0 0 10 6" className="h-[6px] w-[10px]" fill="none" aria-hidden="true">
          <path d="M1 5l4-4 4 4" stroke="#33508a" strokeWidth={2} />
        </svg>
      </button>
      <div className="flex flex-1 flex-col justify-end pb-[2px]">
        <div className="flex h-[13px] flex-col justify-center gap-[1px] rounded-sm border border-[#a9bdf0] bg-[#c6d5fc] px-1">
          <div className="h-px bg-[#8ea5e0]" />
          <div className="h-px bg-[#8ea5e0]" />
          <div className="h-px bg-[#8ea5e0]" />
        </div>
      </div>
      <button type="button" aria-label="Scroll down" className={scrollButton}>
        <svg viewBox="0 0 10 6" className="h-[6px] w-[10px]" fill="none" aria-hidden="true">
          <path d="M1 1l4 4 4-4" stroke="#7b8fc0" strokeWidth={2} />
        </svg>
      </button>
    </div>
  </section>
);

const StatusBar = () => (
  <section className="flex h-[23px] shrink-0 items-stretch">
    <p className="flex-1 border-r border-[#a5a294] pl-[1px] text-[15px] leading-6">
      曲面:F5(拉伸_1)
    </p>
    <p className="ml-[3px] w-[90px] bg-[#d6d3ce] pl-[2px] text-[11px] leading-[18px]">
      选取了1
    </p>
    <div className="relative mt-[3px] mr-[9px] ml-1 h-[17px] w-[182px]">
      <select
        aria-label="智能"
        className="block h-[17px] w-full appearance-none border border-[#7f9db9] bg-[#c6efce] pl-1 text-[11px] leading-none"
      >
        <option>智能</option>
      </select>
      <span className="pointer-events-none absolute top-[1px] right-[1px] flex h-[15px] w-4 items-center justify-center bg-[#c6d5fc]">
        <svg viewBox="0 0 10 6" className="h-[6px] w-[10px]" fill="none" aria-hidden="true">
          <path d="M1 1l4 4 4-4" stroke="#33508a" strokeWidth={2} />
        </svg>
      </span>
    </div>
    <svg viewBox="0 0 10 22" className="mr-10 h-[22px] w-[10px]" aria-hidden="true">
      <path d="M3.500 2.500h3v4h-3zM3.500 8.500h3v4h-3z" fill="#c9b15c" stroke="#665" />
      <circle cx="5" cy="16" r="4" fill="#28a83c" stroke="#123" />
    </svg>
  </section>
);

const TaskBar = () => (
  <footer className="flex h-[30px] shrink-0 items-stretch bg-[linear-gradient(#3f83ee,#245ddb_15%,#2460dc_80%,#1941a5)] text-white">
    <button
      type="button"
      className="flex w-[103px] items-center gap-[5px] rounded-r-lg bg-[linear-gradient(#6cb06a,#3c963c_20%,#388e38_80%,#226b26)] pl-[10px]"
    >
      <svg viewBox="0 0 20 18" className="h-[18px] w-5" aria-hidden="true">
        <path d="M3 2q3-2 7 0L8 8Q5 6 1 8z" fill="#ee5a2a" />
        <path d="M11 3q4 2 8 0l-2 6q-4 2-8 0z" fill="#8cc63e" />
        <path d="M1 9q3-2 7 0l-2 6q-3-2-6 0z" fill="#4a90ee" />
        <path d="M9 10q4 2 8 0l-2 6q-4 2-8 0z" fill="#f8cc3a" />
      </svg>
      <span className="font-['Liberation_Sans',sans-serif] text-xl leading-none font-bold italic [text-shadow:1px_1px_2px_#143a14]">
        start
      </span>
    </button>
    <div className="ml-3 flex items-center gap-[6px] pb-[3px]">
      <a href="#desktop" aria-label="Desktop">
        <svg viewBox="0 0 18 18" className="h-[18px] w-[18px]" aria-hidden="true">
          <path d="M2 5l4-3h8l2 10-3 4H4z" fill="#e8f0f8" stroke="#4a7ab8" />
          <path d="M6 12l6-7 2 2-6 6z" fill="#3a6ab8" />
          <circle cx="8" cy="9" r="4" fill="none" stroke="#5a8ac8" />
        </svg>
      </a>
      <a href="#explorer" aria-label="Explorer">
        <svg viewBox="0 0 18 18" className="h-[18px] w-[18px]" fill="none" aria-hidden="true">
          <path d="M14 12q-2 4-6 3-4-2-3-7 2-4 6-3 3 1 3 5H5" stroke="#8fd4fa" strokeWidth={2.200} />
          <path d="M2 15Q1 9 9 4q7-4 7 0" stroke="#f3c84a" strokeWidth={1.400} />
        </svg>
      </a>
      <a href="#firefox" aria-label="Firefox">
        <Firefox />
      </a>
    </div>
    <span className="w-[26px] pt-[1px] pl-[9px] text-base leading-none">»</span>
    <button
      type="button"
      className="my-[3px] ml-[1px] flex w-[160px] items-center gap-[6px] rounded-sm border border-[#173f9e] bg-[#1e51b8] pl-[9px] text-[13px] whitespace-nowrap"
    >
      <Cube />
      PRT0001 (活动...
    </button>
    <button
      type="button"
      className="my-[3px] flex w-[158px] items-center gap-[2px] rounded-sm border border-[#5a94f8] bg-[#3c81f0] pl-[7px] text-[14px] whitespace-nowrap"
    >
      <Firefox />
      零件建模 - 野火...
    </button>
    <div className="flex-1" />
    <span className="mr-[20px] self-center text-[13px]">EN</span>
    <div className="flex w-[99px] items-center border-l border-[#1042a8] bg-[linear-gradient(#38b8f6,#1290e8_20%,#0f8fe9_80%,#0c6fc4)]">
      <button type="button" aria-label="Show icons" className="-ml-2 flex h-4 w-4 items-center justify-center rounded-full border border-[#9cd0ff] bg-[#2a86ec]">
        <svg viewBox="0 0 6 8" className="h-2 w-[6px]" fill="none" aria-hidden="true">
          <path d="M5 1L2 4l3 3" stroke="#fff" strokeWidth={2} />
        </svg>
      </button>
      <svg viewBox="0 0 16 16" className="ml-[2px] h-4 w-4" aria-hidden="true">
        <path d="M5 1h8v6H5zM1 7h8v6H1z" fill="#a8ccee" stroke="#e8f2fa" />
      </svg>
      <svg viewBox="0 0 16 16" className="h-4 w-4" aria-hidden="true">
        <path d="M1 1h14v14H1z" fill="#e8e2e2" />
        <path d="M1 1h4v5l6-5h4L8 8l2 2-5 4H1z" fill="#d02828" />
        <path d="M8 9l5-1 2 7-5-3z" fill="#444" />
      </svg>
      <time className="ml-[9px] text-[13px]">22:19</time>
    </div>
  </footer>
);

const ForumBadge = () => (
  <div className="pointer-events-none absolute right-0 bottom-[5px] h-[62px] w-[211px] bg-white/25">
    <div className="flex opacity-60">
      <svg viewBox="0 0 60 60" className="h-[60px] w-[60px] shrink-0" fill="none" aria-hidden="true">
        <ellipse cx="20" cy="19" rx="19" ry="12" transform="rotate(38 20 19)" stroke="#5f7396" strokeWidth={3} />
        <ellipse cx="24" cy="38" rx="17" ry="9" transform="rotate(-48 24 38)" stroke="#7f86b0" strokeWidth={2} />
        <path d="M43 20q16 2 11 20-7 17-22 16" stroke="#c03058" strokeWidth={4} />
        <path d="M43 20q-12 4-16 18-2 14 5 18" stroke="#a06a90" strokeWidth={2} />
      </svg>
      <p className="ml-[10px] pt-1 font-['Noto_Serif_CJK_SC','Noto_Sans_CJK_SC',serif] text-[29px] leading-8 font-bold text-[#3fa45c]">
        野火论坛
      </p>
    </div>
    <p className="-mt-5 ml-[58px] font-['Liberation_Sans',sans-serif] text-base leading-4 whitespace-nowrap text-[#3468c0] opacity-60">
      www.proewildfire.cn
    </p>
  </div>
);

const App: FC = () => {
  return (
    <div className="relative flex min-h-screen flex-col overflow-hidden bg-[#eeeade] font-['Noto_Sans','Noto_Sans_CJK_SC',sans-serif] text-black">
      <TitleBar />
      <MenuBar />
      <ToolBars />
      <div className="flex flex-1">
        <ModelTree />
        <Splitter />
        <Viewport />
        <RightTools />
      </div>
      <MessageLog />
      <StatusBar />
      <TaskBar />
      <ForumBadge />
    </div>
  );
};

export default App;
